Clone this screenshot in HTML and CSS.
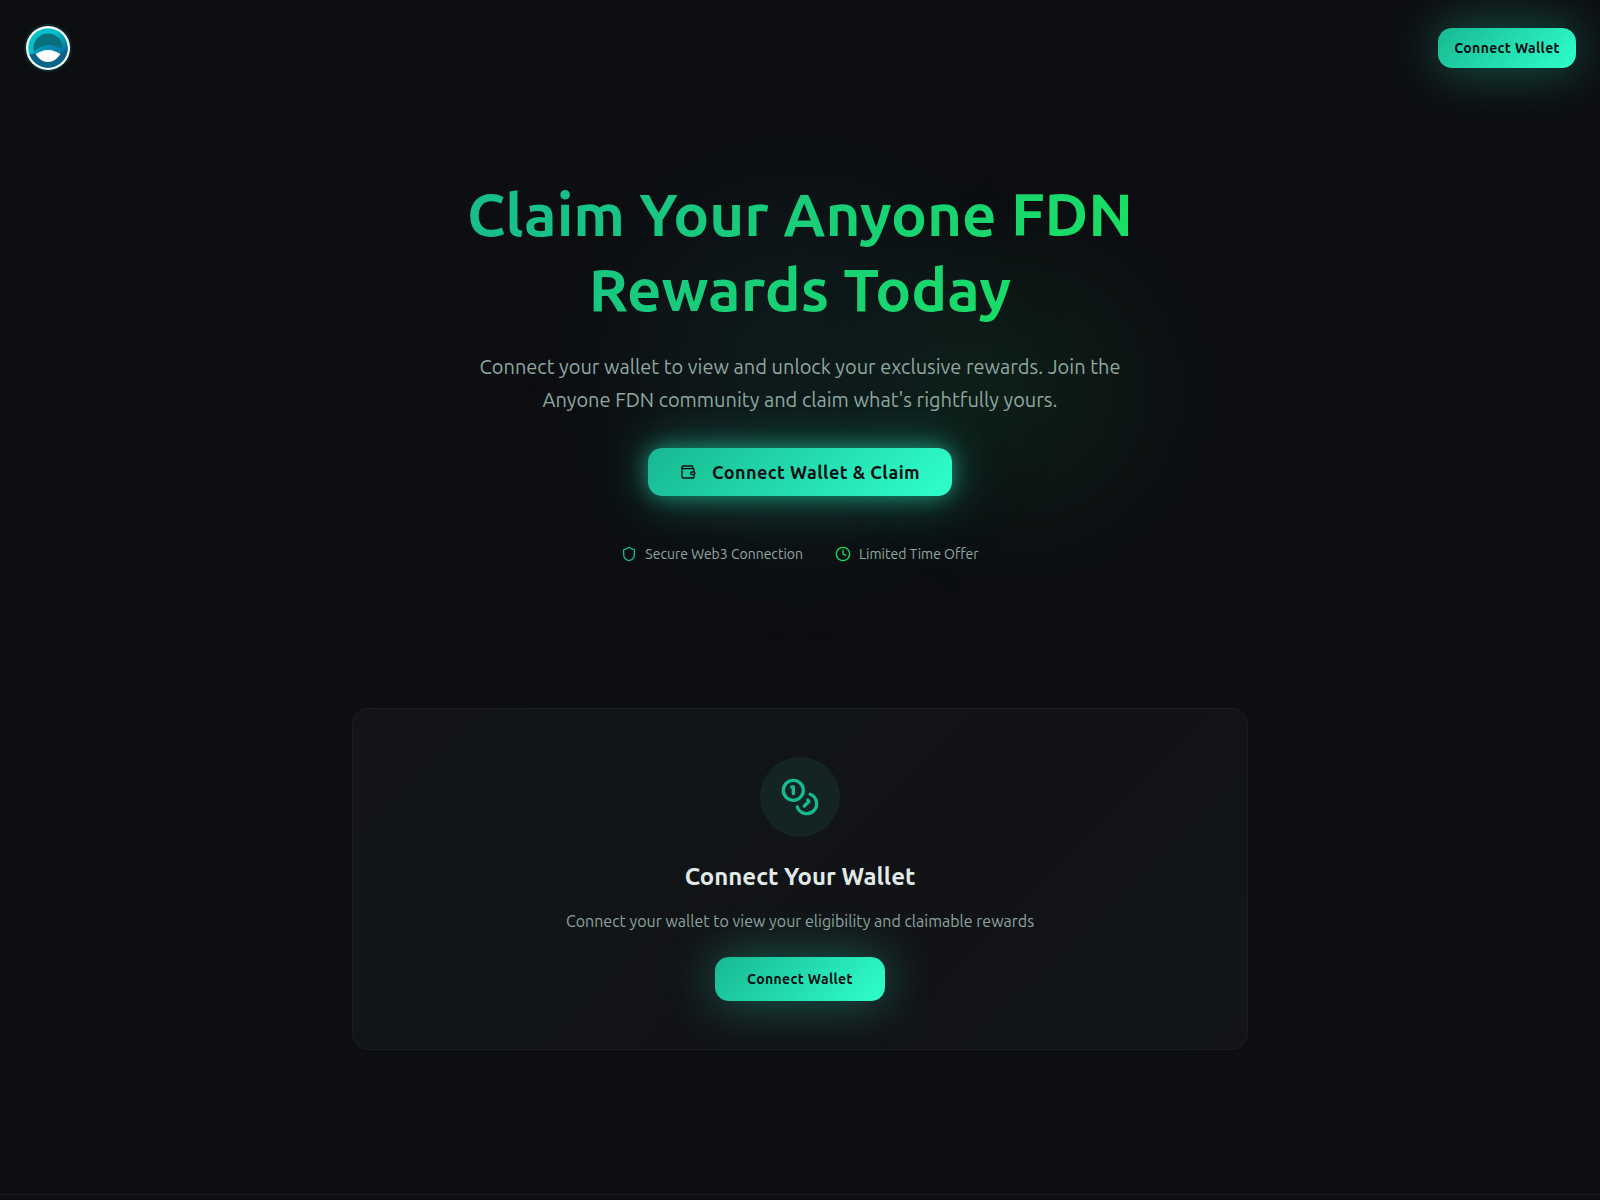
FILE: index.html
```html
<!DOCTYPE html>
<html lang="en">
<head>
  <meta charset="UTF-8">
  <meta name="viewport" content="width=device-width, initial-scale=1.0">
  <title>Anyone FDN Rewards</title>
  <link rel="stylesheet" href="styles.css">
</head>
<body>
  <header class="header">
    <a href="#" class="logo" aria-label="Anyone FDN">
      <svg viewBox="0 0 48 48" width="48" height="48">
        <defs>
          <linearGradient id="ring" x1="0" y1="0" x2="1" y2="1">
            <stop offset="0.4" stop-color="#04bfc7"/>
            <stop offset="0.8" stop-color="#0c6c94"/>
          </linearGradient>
          <linearGradient id="wave" x1="0" y1="0" x2="1" y2="0">
            <stop offset="0" stop-color="#06a5bd"/>
            <stop offset="1" stop-color="#0b74a5"/>
          </linearGradient>
          <clipPath id="disc"><circle cx="24" cy="24" r="19.5"/></clipPath>
        </defs>
        <circle cx="24" cy="24" r="24" fill="#0c2a27"/>
        <circle cx="24" cy="24" r="22" fill="#fff"/>
        <circle cx="24" cy="24" r="19.8" fill="url(#ring)"/>
        <circle cx="24" cy="24" r="14.5" fill="#07707c"/>
        <g clip-path="url(#disc)">
          <path d="M4 30 C10 30 15 21 24 21 C33 21 36 26 44 23 V44 H4 Z" fill="url(#wave)"/>
          <path d="M4 30 C9 31 10 30 12 29 C16 41 32 41 36 29 C39 27 42 26 44 22 V44 H4 Z" fill="#0b6387"/>
        </g>
        <path d="M11.500 30 C16 28 19 26 24 26 C29 26 32 28 36.500 30 C33 35 29 38 24 38 C19 38 15 35 11.500 30 Z" fill="#fff"/>
      </svg>
    </a>
    <button class="btn btn-small">Connect Wallet</button>
  </header>

  <main>
    <!-- Hero -->
    <section class="hero">
      <div class="glow glow-teal"></div>
      <div class="glow glow-green"></div>
      <div class="hero-content">
        <h1>Claim Your Anyone FDN Rewards Today</h1>
        <p class="subtitle">Connect your wallet to view and unlock your exclusive rewards. Join the Anyone FDN community and claim what's rightfully yours.</p>
        <button class="btn btn-large">
          <svg class="icon" viewBox="0 0 24 24"><path d="M19 7V4a1 1 0 0 0-1-1H5a2 2 0 0 0 0 4h15a1 1 0 0 1 1 1v4h-3a2 2 0 0 0 0 4h3a1 1 0 0 0 1-1v-2a1 1 0 0 0-1-1"/><path d="M3 5v14a2 2 0 0 0 2 2h15a1 1 0 0 0 1-1v-4"/></svg>
          Connect Wallet &amp; Claim
        </button>
        <ul class="features">
          <li>
            <svg class="icon teal" viewBox="0 0 24 24"><path d="M20 13c0 5-3.500 7.500-7.660 8.950a1 1 0 0 1-.67-.01C7.500 20.500 4 18 4 13V6a1 1 0 0 1 1-1c2 0 4.500-1.200 6.240-2.720a1.170 1.170 0 0 1 1.520 0C14.510 3.810 17 5 19 5a1 1 0 0 1 1 1z"/></svg>
            Secure Web3 Connection
          </li>
          <li>
            <svg class="icon green" viewBox="0 0 24 24"><circle cx="12" cy="12" r="10"/><path d="M12 6v6l4 2"/></svg>
            Limited Time Offer
          </li>
        </ul>
      </div>
    </section>

    <!-- Wallet card -->
    <section class="claim">
      <div class="card">
        <div class="card-icon">
          <svg class="icon" viewBox="0 0 24 24"><circle cx="8" cy="8" r="6"/><path d="M18.090 10.370A6 6 0 1 1 10.340 18"/><path d="M7 6h1v4"/><path d="m16.710 13.880.7.710-2.820 2.820"/></svg>
        </div>
        <h2>Connect Your Wallet</h2>
        <p>Connect your wallet to view your eligibility and claimable rewards</p>
        <button class="btn btn-medium">Connect Wallet</button>
      </div>
    </section>
  </main>

  <footer class="footer"></footer>
</body>
</html>
```
FILE: styles.css
```css
* {
  box-sizing: border-box;
  margin: 0;
  padding: 0;
}

body {
  min-height: 100vh;
  background: #0d0e12;
  color: #e0ebe8;
  font-family: Ubuntu, "Noto Sans", sans-serif;
  font-weight: 400;
  overflow-x: hidden;
}

.header {
  display: flex;
  align-items: center;
  justify-content: space-between;
  padding: 24px;
}

.logo,
.logo svg {
  display: block;
}

.icon {
  width: 16px;
  height: 16px;
  flex-shrink: 0;
  fill: none;
  stroke: currentColor;
  stroke-width: 2;
  stroke-linecap: round;
  stroke-linejoin: round;
}

.teal {
  color: #18b991;
}

.green {
  color: #19dc5f;
}

.btn {
  display: inline-flex;
  align-items: center;
  justify-content: center;
  gap: 16px;
  border: none;
  border-radius: 14px;
  background: linear-gradient(135deg, #18b892, #2fffcb);
  box-shadow: 0 0 50px rgba(37, 226, 177, 0.4);
  color: #0d0e12;
  font-family: inherit;
  font-size: 14px;
  font-weight: 600;
  letter-spacing: 0.025em;
  white-space: nowrap;
  cursor: pointer;
}

.btn-small {
  height: 40px;
  padding: 0 16px;
}

.btn-medium {
  height: 44px;
  padding: 0 32px;
}

.btn-large {
  height: 48px;
  padding: 0 32px;
  font-size: 18px;
  box-shadow: 0 0 20px rgba(37, 226, 177, 0.5), 0 0 50px rgba(37, 226, 177, 0.4);
}

.hero {
  position: relative;
  padding: 80px 24px;
}

.hero-content {
  position: relative;
  display: flex;
  flex-direction: column;
  align-items: center;
  max-width: 768px;
  margin: 0 auto;
  text-align: center;
}

/* soft lights behind the hero */
.glow {
  position: absolute;
  top: 50%;
  left: 50%;
  border-radius: 50%;
}

.glow-teal {
  width: 500px;
  height: 500px;
  transform: translate(-50%, -50%);
  background: radial-gradient(circle, rgba(24, 184, 146, 0.09), rgba(24, 184, 146, 0) 70%);
  filter: blur(40px);
}

.glow-green {
  width: 400px;
  height: 400px;
  transform: translate(5%, -45%);
  background: radial-gradient(circle, rgba(25, 228, 92, 0.08), rgba(25, 228, 92, 0) 70%);
  filter: blur(30px);
}

h1 {
  margin-bottom: 24px;
  background: linear-gradient(135deg, #18b892, #19e65c);
  -webkit-background-clip: text;
  background-clip: text;
  color: transparent;
  font-size: 60px;
  font-weight: 600;
  line-height: 75px;
}

.subtitle {
  max-width: 672px;
  margin-bottom: 32px;
  color: #8fa8a0;
  font-size: 20px;
  line-height: 33px;
}

.features {
  display: flex;
  gap: 32px;
  margin-top: 48px;
  color: #8fa8a0;
  font-size: 14px;
  line-height: 20px;
  list-style: none;
}

.features li {
  display: flex;
  align-items: center;
  gap: 8px;
}

.claim {
  padding: 64px 24px;
}

.card {
  display: flex;
  flex-direction: column;
  align-items: center;
  max-width: 896px;
  margin: 0 auto;
  padding: 48px;
  border: 1px solid #1b1d21;
  border-radius: 16px;
  background: linear-gradient(135deg, #131418, #111518 30%, #121317 50%, #121317 70%, #111518 90%, #131418);
  text-align: center;
}

.card-icon {
  display: flex;
  align-items: center;
  justify-content: center;
  width: 80px;
  height: 80px;
  margin-bottom: 24px;
  border-radius: 50%;
  background: #132423;
  color: #18b892;
}

.card-icon .icon {
  width: 40px;
  height: 40px;
}

h2 {
  margin-bottom: 16px;
  font-size: 24px;
  font-weight: 600;
  line-height: 32px;
}

.card p {
  margin-bottom: 24px;
  color: #8fa39d;
  font-size: 16px;
  line-height: 24px;
}

.footer {
  margin-top: 80px;
  padding: 32px 24px;
  border-top: 1px solid #1b1d21;
}
```
